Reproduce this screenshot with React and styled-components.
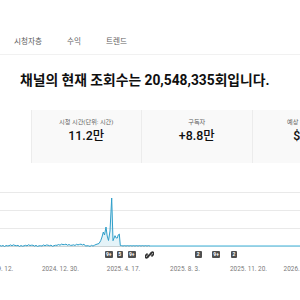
import React from 'react';
import styled, { createGlobalStyle } from 'styled-components';

const GlobalStyle = createGlobalStyle`
  body {
    margin: 0;
    background: #ffffff;
    font-family: Roboto, "Noto Sans CJK KR", sans-serif;
    overflow: hidden;
  }
`;

const tabs = ['시청자층', '수익', '트렌드'];

const cards = [
    { label: '조회수', value: '205.5만', active: 1 },
    { label: '시청 시간(단위: 시간)', value: '11.2만' },
    { label: '구독자', value: '+8.8만' },
    { label: '예상 수익(USD)', value: '$894' },
];

const badges = [
    { x: 105, text: '9+' },
    { x: 116.5, text: '5' },
    { x: 128, text: '9+' },
    { x: 195, text: '2' },
    { x: 212.3, text: '9+' },
    { x: 230.7, text: '2' },
];

const dates = [
    { x: -3.5, text: '2024. 9. 12.' },
    { x: 60.4, text: '2024. 12. 30.' },
    { x: 123.5, text: '2025. 4. 17.' },
    { x: 185, text: '2025. 8. 3.' },
    { x: 248.5, text: '2025. 11. 20.' },
    { x: 298.5, text: '2026. 3. 9.' },
];

// daily views, page x -> y inside the chart (baseline 55.5)
const spike = [
    [96, 53.5], [99, 52.5], [100.7, 49.7], [102, 46], [103.3, 41], [104.5, 44],
    [106, 36], [107.2, 45], [108.5, 49.5], [110, 40], [111.7, 7], [113, 49.7],
    [115, 44.7], [116.2, 47], [117.3, 47], [118.2, 44], [119.3, 43], [120.3, 54.5],
];

const buildLine = () => {
    const pts = [];
    for (let x = 0; x < 96; x += 1.5) {
        const n = Math.sin(x * 1.7) * 0.5 + Math.sin(x * 0.37) * 0.4;
        const lift = x > 55 && x < 85 ? 0.8 : 0;
        pts.push([x, 54.6 - lift + n]);
    }
    spike.forEach((p) => pts.push(p));
    for (let x = 121.5; x <= 150; x += 1.5) {
        pts.push([x, 54.8 + Math.sin(x * 2.1) * 0.3]);
    }
    return pts;
};

const linePts = buildLine();
const lineStr = linePts.map((p) => p.join(',')).join(' ');
const areaStr = `0,55.5 ${ lineStr } 150,55.5`;

const ChainIcon = () => (
    <svg width="9" height="8" viewBox="0 0 18 16">
        <g fill="none" stroke="#333333" strokeWidth="3.6" strokeLinecap="round">
            <path d="M7 10.5 L4.5 13 a2.6 2.6 0 0 1 -3.6 -3.6 L4 6.3" />
            <path d="M11 5.5 L13.5 3 a2.6 2.6 0 0 1 3.6 3.6 L14 9.7" />
            <path d="M6.5 9.5 L11.5 6.5" />
        </g>
    </svg>
);

const App = () => {
    return (
        <Page>
            <GlobalStyle />
            <TabBar>
                { tabs.map((t) => <Tab key={ t }>{ t }</Tab>) }
            </TabBar>
            <Headline>채널의 현재 조회수는 20,548,335회입니다.</Headline>
            <CardRow>
                { cards.map((c) => (
                    <Card key={ c.label } active={ c.active }>
                        <CardLabel>{ c.label }</CardLabel>
                        <CardValue active={ c.active }>{ c.value }</CardValue>
                    </Card>
                )) }
            </CardRow>
            <Chart>
                <svg width="300" height="70" viewBox="0 0 300 70">
                    <g stroke="#e9e9e9" strokeWidth="1">
                        <line x1="0" y1="1.5" x2="300" y2="1.5" />
                        <line x1="0" y1="19.5" x2="300" y2="19.5" />
                        <line x1="0" y1="37.5" x2="300" y2="37.5" />
                    </g>
                    <line x1="0" y1="55.5" x2="300" y2="55.5" stroke="#d6d6d6" strokeWidth="1" />
                    <polygon points={ areaStr } fill="rgba(65, 168, 208, 0.14)" />
                    <line x1="150" y1="55" x2="300" y2="55" stroke="#7ccbe6" strokeWidth="1.6" />
                    <polyline points={ lineStr } fill="none" stroke="#2f9fca" strokeWidth="1" strokeLinejoin="round" />
                </svg>
                { badges.map((b) => (
                    <Badge key={ b.x } style={ { left: b.x } }>{ b.text }</Badge>
                )) }
                <IconMark><ChainIcon /></IconMark>
            </Chart>
            <Axis>
                { dates.map((d) => (
                    <DateLabel key={ d.text } style={ { left: d.x } }>{ d.text }</DateLabel>
                )) }
            </Axis>
        </Page>
    );
};

export default App;

const Page = styled.div`
  width: 300px;
  height: 300px;
  overflow: hidden;
  background: #ffffff;
`;

const TabBar = styled.div`
  display: flex;
  align-items: flex-end;
  gap: 25px;
  height: 55px;
  padding: 0 0 5px 14px;
  box-sizing: border-box;
  border-bottom: 1px solid #f1f1f1;
`;

const Tab = styled.div`
  font-size: 7.6px;
  line-height: 14px;
  color: #606060;
`;

const Headline = styled.div`
  margin-top: 16px;
  padding-left: 20px;
  font-size: 13.8px;
  line-height: 18px;
  font-weight: 700;
  color: #0f0f0f;
  white-space: nowrap;
`;

const CardRow = styled.div`
  display: flex;
  margin: 21px 0 0 -79px;
  height: 53px;
`;

const Card = styled.div`
  flex: 0 0 110.5px;
  box-sizing: border-box;
  padding-top: 8px;
  text-align: center;
  white-space: nowrap;
  background: ${ ({ active }) => active ? '#ffffff' : '#f9f9f9' };
  border-right: 1px solid #ececec;
`;

const CardLabel = styled.div`
  font-size: 6.2px;
  line-height: 8px;
  color: #606060;
`;

const CardValue = styled.div`
  margin-top: 2px;
  font-size: 12.4px;
  line-height: 16px;
  font-weight: 500;
  color: ${ ({ active }) => active ? '#3b78d8' : '#0f0f0f' };
`;

const Chart = styled.div`
  position: relative;
  margin-top: 28px;
  height: 70px;

  svg {
    display: block;
  }
`;

const Badge = styled.div`
  position: absolute;
  top: 60px;
  min-width: 6.6px;
  height: 7px;
  padding: 0 1px;
  box-sizing: border-box;
  border-radius: 1px;
  background: #4f4f4f;
  color: #ffffff;
  font-size: 5px;
  line-height: 7px;
  font-weight: 700;
  text-align: center;
`;

const IconMark = styled.div`
  position: absolute;
  top: 59.5px;
  left: 145px;
  line-height: 0;
`;

const Axis = styled.div`
  position: relative;
  height: 16px;
`;

const DateLabel = styled.div`
  position: absolute;
  top: 0;
  transform: translateX(-50%);
  font-size: 6.4px;
  line-height: 16px;
  color: #7a7a7a;
  white-space: nowrap;
`;
